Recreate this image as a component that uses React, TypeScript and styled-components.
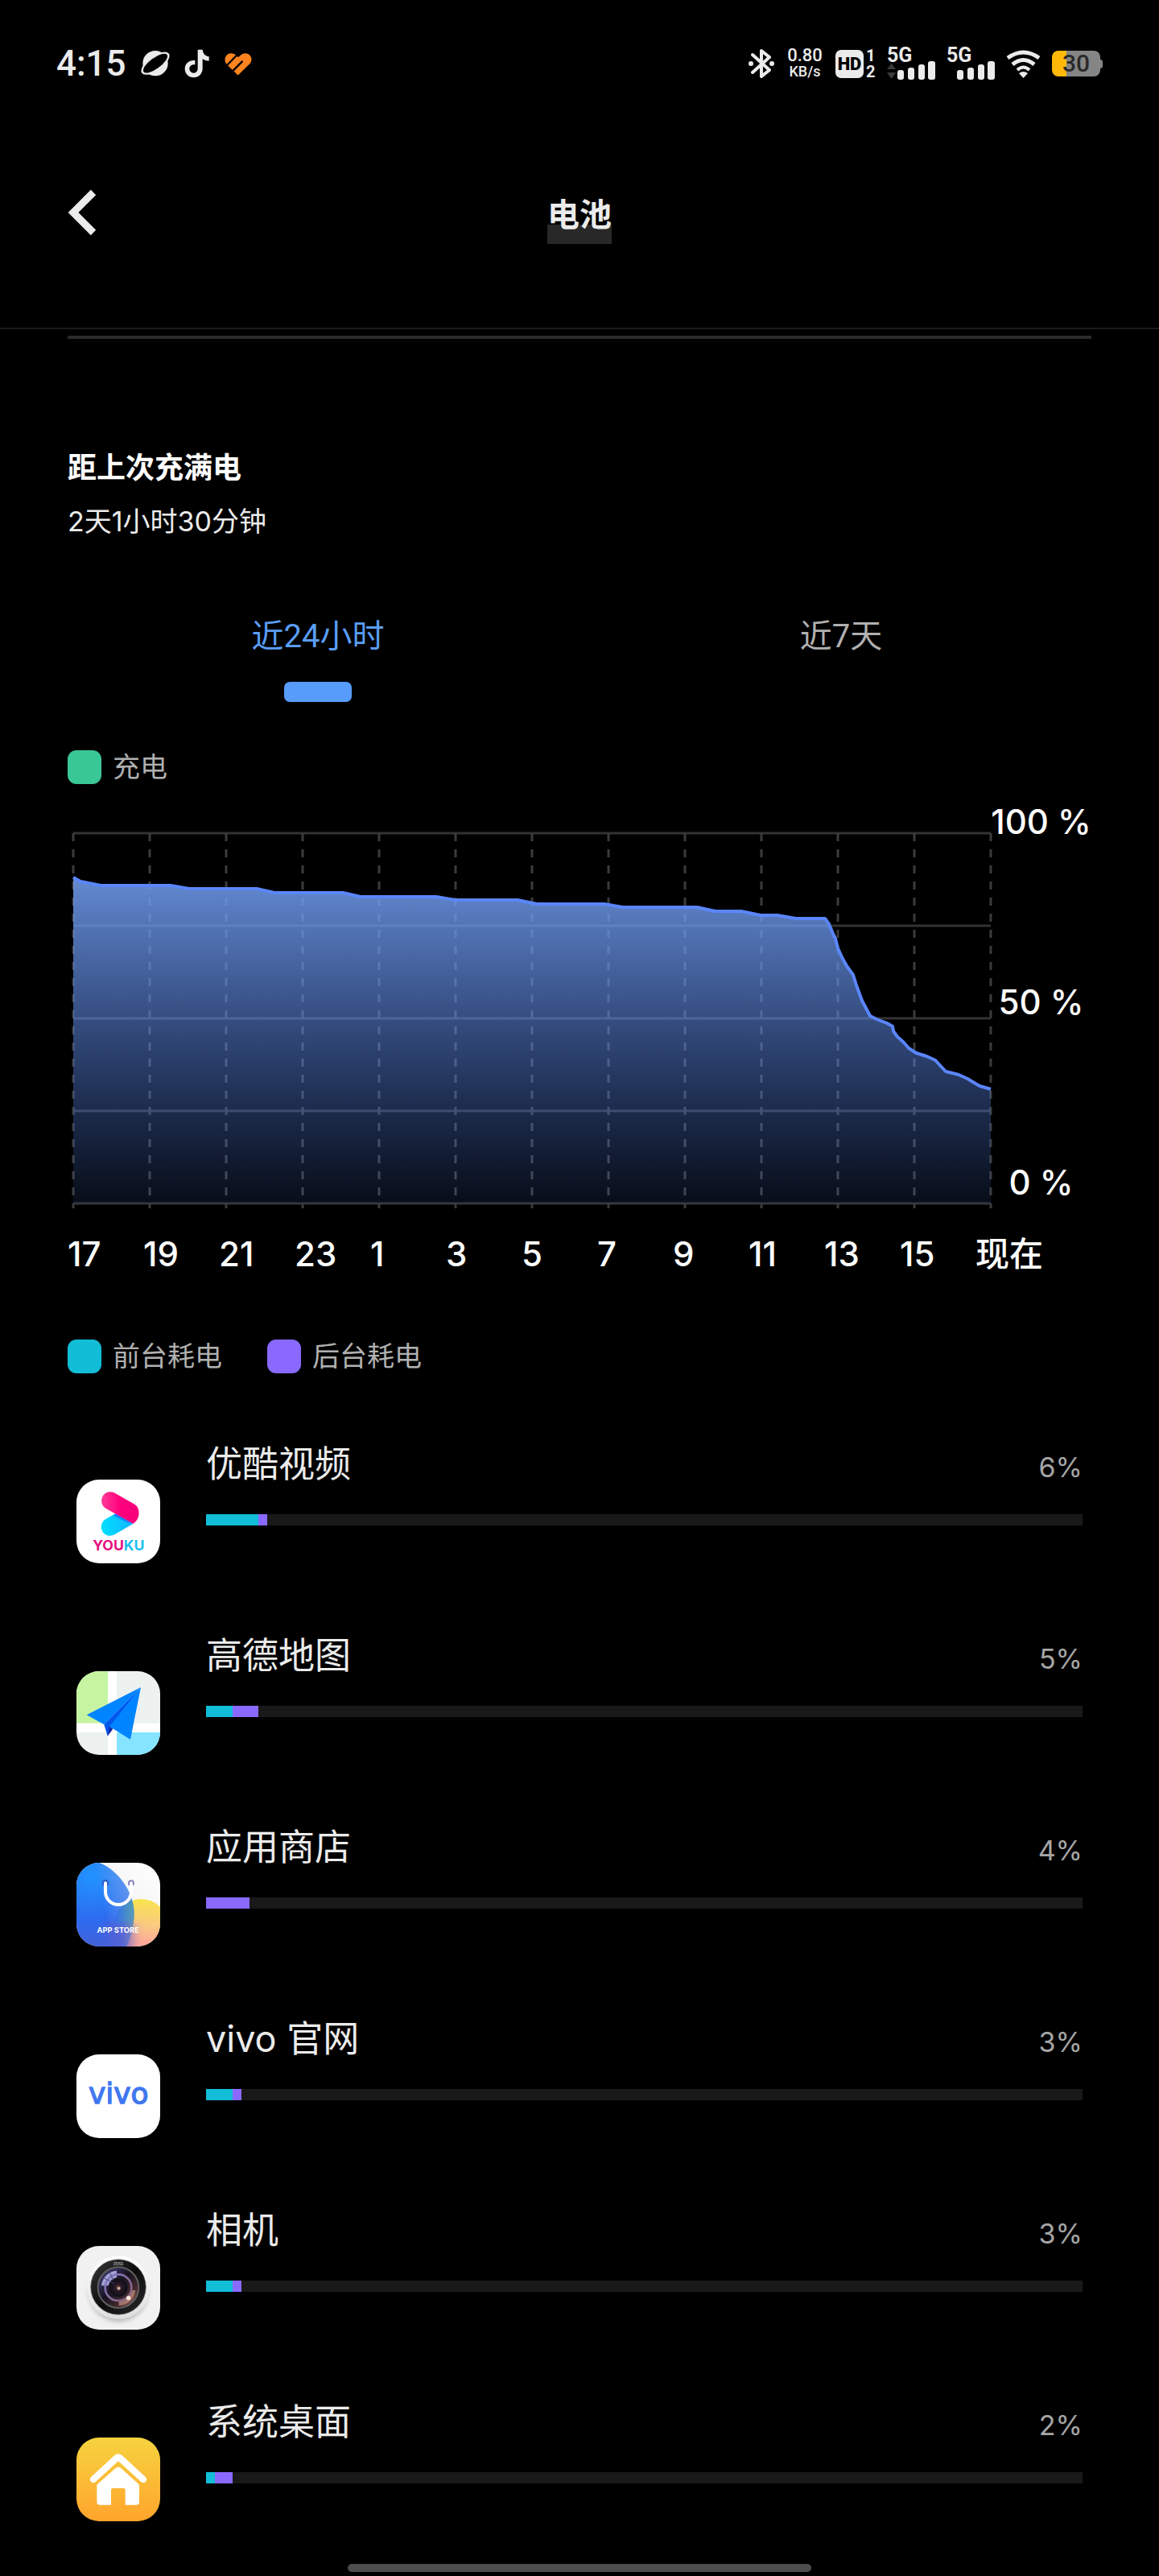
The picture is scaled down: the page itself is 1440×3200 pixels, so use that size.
import React, { useState } from 'react';
import styled, { createGlobalStyle } from 'styled-components';

const GlobalStyle = createGlobalStyle`
  *, *::before, *::after { box-sizing: border-box; }
  body {
    margin: 0;
    background: #000;
    color: #ebebeb;
    font-family: Inter, "Noto Sans CJK SC", sans-serif;
  }
  h1, h2, p, ul { margin: 0; padding: 0; }
  button { border: 0; padding: 0; background: none; color: inherit; font: inherit; cursor: pointer; }
  svg { display: block; flex: none; }
`;

const Screen = styled.div`
  position: relative;
  overflow: hidden;
`;

/* ---------- status bar ---------- */

const StatusBar = styled.div`
  display: flex;
  justify-content: space-between;
  align-items: center;
  height: 128px;
  padding: 30px 70px 0;
  font-family: Roboto, sans-serif;
`;

const StatusGroup = styled.div<{ $gap: number }>`
  display: flex;
  align-items: center;
  gap: ${(p) => p.$gap}px;
`;

const Clock = styled.time`
  font-size: 44px;
  font-weight: 500;
  line-height: 52px;
`;

const NetSpeed = styled.div`
  display: flex;
  flex-direction: column;
  align-items: center;
  width: 48px;
  font-weight: 500;
  font-size: 18px;
  line-height: 20px;
`;

const NetValue = styled.span`
  font-size: 22px;
`;

const HdBlock = styled.div`
  display: flex;
  align-items: center;
  gap: 3px;
`;

const HdBadge = styled.span`
  width: 35px;
  border-radius: 7px;
  background: #ebebeb;
  color: #000;
  font-size: 22px;
  font-weight: 900;
  line-height: 35px;
  text-align: center;
`;

const SimStack = styled.span`
  display: flex;
  flex-direction: column;
  width: 12px;
  font-size: 20px;
  font-weight: 700;
  line-height: 20px;
`;

const BatteryBody = styled.div`
  display: flex;
  align-items: center;
`;

const BatteryCell = styled.div<{ $level: number }>`
  width: 60px;
  border-radius: 8px;
  background: linear-gradient(90deg, #ffb908 ${(p) => p.$level}%, #858585 ${(p) => p.$level}%);
  color: #292929;
  font-size: 30px;
  font-weight: 500;
  line-height: 32px;
  text-align: center;
`;

const BatteryCap = styled.div`
  width: 3px;
  height: 11px;
  border-radius: 0 4px 4px 0;
  background: #858585;
`;

/* ---------- header ---------- */

const Header = styled.header`
  display: grid;
  grid-template-columns: 1fr auto 1fr;
  align-items: center;
  height: 281px;
  padding: 0 84px 8px;
  border-bottom: 2px solid #1a1a1a;
`;

const BackButton = styled.button`
  justify-self: start;
`;

const Title = styled.h1`
  padding-top: 6px;
  background: linear-gradient(#282828, #282828) 0 100% / 100% 24px no-repeat;
  font-size: 40px;
  font-weight: 700;
  line-height: 72px;
`;

/* ---------- content ---------- */

const Content = styled.main`
  padding: 8px 84px 0;
`;

const Divider = styled.hr`
  height: 4px;
  margin: 0;
  border: 0;
  background: #2b2b2b;
`;

const Summary = styled.section`
  display: flex;
  flex-direction: column;
  gap: 19px;
  padding: 136px 0 89px;
  line-height: 48px;
`;

const SummaryTitle = styled.h2`
  color: #fff;
  font-size: 36px;
  font-weight: 700;
`;

const SummaryText = styled.p`
  font-size: 34px;
`;

const Tabs = styled.div`
  display: grid;
  grid-template-columns: 1fr 1fr;
  margin: 0 -14px 60px;
`;

const Tab = styled.button<{ $active: boolean }>`
  display: flex;
  flex-direction: column;
  align-items: center;
  gap: 26px;
  color: ${(p) => (p.$active ? '#5a9df5' : '#b0b0b0')};
  font-family: Roboto, "Noto Sans CJK SC", sans-serif;
  font-size: 40px;
  line-height: 60px;

  &::after {
    content: '';
    width: 84px;
    height: 25px;
    border-radius: 7px;
    background: ${(p) => (p.$active ? '#579cfb' : 'transparent')};
  }
`;

const Legend = styled.div`
  display: flex;
  gap: 56px;
`;

const LegendItem = styled.div`
  display: flex;
  align-items: center;
  gap: 14px;
  color: #b0b0b0;
  font-size: 34px;
  line-height: 42px;
`;

const Swatch = styled.span<{ $color: string }>`
  width: 42px;
  height: 42px;
  border-radius: 11px;
  background: ${(p) => p.$color};
`;

const Chart = styled.figure`
  display: flex;
  height: 500px;
  margin: 21px 0 0;
  padding-left: 7px;
  color: #fff;
`;

const Plot = styled.svg`
  flex: 1;
  min-width: 0;
  height: 460px;
  margin-top: 40px;
  overflow: visible;
`;

const YAxis = styled.div`
  display: flex;
  flex-direction: column;
  justify-content: space-between;
  align-items: center;
  width: 125px;
  font-size: 42px;
  font-weight: 500;
  line-height: 52px;
  white-space: nowrap;
`;

const XAxis = styled.div`
  display: grid;
  grid-template-columns: repeat(12, 1fr) 144px;
  margin: 37px 0 80px;
  color: #fff;
  font-size: 42px;
  font-weight: 500;
  line-height: 52px;
`;

/* ---------- app list ---------- */

const AppList = styled.ul`
  margin-top: 65px;
  padding: 0 11px;
  list-style: none;
`;

const AppRow = styled.li`
  display: flex;
  gap: 57px;
  height: 238px;
`;

const AppIcon = styled.svg`
  width: 104px;
  height: 104px;
  margin-top: 67px;
  border-radius: 28px;
`;

const AppInfo = styled.div`
  display: flex;
  flex: 1;
  flex-direction: column;
  gap: 32px;
  padding-top: 18px;
`;

const AppLine = styled.div`
  display: flex;
  justify-content: space-between;
  align-items: baseline;
  height: 60px;
  line-height: 60px;
`;

const AppName = styled.span`
  font-size: 45px;
`;

const AppShare = styled.span`
  color: #a6a6a6;
  font-size: 34px;
`;

const Track = styled.div`
  display: flex;
  height: 14px;
  background: #191919;
`;

const Segment = styled.div<{ $color: string }>`
  background: ${(p) => p.$color};
`;

const HomeIndicator = styled.div`
  position: absolute;
  bottom: 4px;
  left: 30%;
  width: 40%;
  height: 10px;
  border-radius: 5px;
  background: #4d4d4d;
`;

/* ---------- data ---------- */

const FOREGROUND = '#12bdd8';
const BACKGROUND = '#8969ff';

const LINE: [number, number][] = [
  [0, 55], [9, 60], [34, 65], [121, 65], [144, 69], [228, 69], [250, 74], [335, 74], [357, 79],
  [451, 79], [474, 83], [552, 83], [576, 88], [660, 88], [683, 92], [775, 92], [798, 97],
  [830, 97], [854, 102], [875, 102], [898, 106], [934, 106], [939, 113], [944, 125], [947, 131],
  [950, 143], [955, 154], [961, 165], [969, 176], [973, 189], [980, 208], [990, 227], [998, 231],
  [1011, 236], [1018, 240], [1019, 246], [1024, 253], [1031, 259], [1038, 267], [1047, 273],
  [1060, 277], [1071, 282], [1084, 296], [1100, 300], [1111, 305], [1126, 314], [1140, 318],
];

const HOURS = ['17', '19', '21', '23', '1', '3', '5', '7', '9', '11', '13', '15', '现在'];

/* ---------- icons ---------- */

const Signal = ({ data }: { data?: boolean }) => (
  <svg width="60" height="60" viewBox="0 -10 60 60" fill="#ebebeb">
    <text x="0" y="18" fontSize="25" fontWeight="700">5G</text>
    {data && <path d="M5.500 20 11 27H0zM5.500 39 0 31h11z" fill="#3a3a3a" />}
    <rect x="13" y="28" width="8" height="12" rx="3" />
    <rect x="26" y="25" width="8" height="15" rx="3" />
    <rect x="39" y="21" width="8" height="19" rx="3" />
    <rect x="51" y="17" width="9" height="23" rx="3" />
  </svg>
);

const YoukuIcon = () => (
  <AppIcon viewBox="0 0 312 312">
    <defs>
      <linearGradient id="ykPink"><stop offset="0" stopColor="#ff3d97" /><stop offset=".5" stopColor="#ff007c" /><stop offset="1" stopColor="#f5007c" /></linearGradient>
      <linearGradient id="ykCyan"><stop offset="0" stopColor="#00e0ff" /><stop offset="1" stopColor="#10b4ff" /></linearGradient>
    </defs>
    <rect width="312" height="312" fill="#fff" />
    <path d="M212 164 142 205A33 33 0 0 1 109 147L145 127Z" fill="url(#ykCyan)" />
    <path d="M145 127 212 164 190 160 138 134Z" fill="#1a7fff" />
    <path d="M143 50 217 92C236 104 236 132 227 148Q221 159 212 164L110 108A33 33 0 0 1 143 50Z" fill="url(#ykPink)" />
    <text x="157" y="265" textAnchor="middle" fontSize="53" fontWeight="700" fill="#e6107f">YOU<tspan fill="#1cc0ee">KU</tspan></text>
  </AppIcon>
);

const AmapIcon = () => (
  <AppIcon viewBox="0 0 312 312">
    <rect width="312" height="312" fill="#edf1f0" />
    <rect width="117" height="194" fill="#c5f5a0" />
    <rect x="150" y="228" width="162" height="84" fill="#85e4ff" />
    <path d="M117 0H150V194H312V228H150V312H117V228H0V194H117Z" fill="#fff" />
    <path d="M240 60 103 199 116 242 126 206Z" fill="#0057ee" />
    <path d="M116 242 123 205 136 215Z" fill="#1027a8" />
    <path d="M240 60 38 163 103 199ZM240 60 201 254 123 206Z" fill="#0084ff" />
  </AppIcon>
);

const StoreIcon = () => (
  <AppIcon viewBox="0 0 312 312">
    <defs>
      <radialGradient id="stBlue" gradientUnits="userSpaceOnUse" cx="55" cy="50" r="270"><stop offset="0" stopColor="#2094ff" /><stop offset=".6" stopColor="#2d6cf0" /><stop offset="1" stopColor="#4560d8" /></radialGradient>
      <linearGradient id="stPale" gradientUnits="userSpaceOnUse" x1="90" y1="120" x2="215" y2="90"><stop offset="0" stopColor="#7db0f5" stopOpacity="0" /><stop offset="1" stopColor="#7da4e8" stopOpacity=".8" /></linearGradient>
      <linearGradient id="stSun" x1="0" y1="0" x2="0" y2="1"><stop offset="0" stopColor="#f8e44e" /><stop offset=".5" stopColor="#fbc884" /><stop offset=".85" stopColor="#ffa49c" /></linearGradient>
      <linearGradient id="stMix" gradientUnits="userSpaceOnUse" x1="140" y1="0" x2="218" y2="0"><stop offset="0" stopColor="#2f6ff0" stopOpacity=".9" /><stop offset="1" stopColor="#56a0a8" stopOpacity=".9" /></linearGradient>
      <linearGradient id="stFade" x1="0" y1="0" x2="1" y2="0"><stop offset="0" stopColor="#4560dc" /><stop offset=".5" stopColor="#5a62d4" stopOpacity=".9" /><stop offset="1" stopColor="#ffa49c" stopOpacity="0" /></linearGradient>
      <linearGradient id="stPaper" x1="1" y1="0" x2="0" y2="1"><stop offset="0" stopColor="#fff" /><stop offset=".4" stopColor="#f6f6f8" /><stop offset="1" stopColor="#d8d8e4" /></linearGradient>
      <clipPath id="stClip"><circle cx="240" cy="238" r="103" /></clipPath>
      <filter id="stSoft" x="-30%" y="-30%" width="160%" height="160%"><feGaussianBlur stdDeviation="12" /></filter>
    </defs>
    <rect width="312" height="312" fill="url(#stPaper)" />
    <circle cx="240" cy="238" r="103" fill="url(#stSun)" />
    <path d="M0 0H85C150 25 208 100 214 175C217 225 205 275 185 312H0Z" fill="url(#stBlue)" />
    <path d="M0 0H85C150 25 208 100 214 175C217 225 205 275 185 312H0Z" fill="url(#stPale)" />
    <path d="M0 0H85C150 25 208 100 214 175C217 225 205 275 185 312H0Z" fill="url(#stMix)" clipPath="url(#stClip)" />
    <path d="M110 225H250L225 325H110Z" fill="url(#stFade)" filter="url(#stSoft)" />
    <circle cx="108" cy="76" r="13" fill="#2a5fc8" />
    <circle cx="204" cy="76" r="12" fill="#8784bb" />
    <path d="M108 76V108A48 48 0 0 0 204 108V76" fill="none" stroke="#fff" strokeWidth="12" strokeLinecap="round" />
    <text x="155" y="262" textAnchor="middle" fontSize="28" fontWeight="700" fill="#fff">APP STORE</text>
  </AppIcon>
);

const VivoIcon = () => (
  <AppIcon viewBox="0 0 312 312">
    <rect width="312" height="312" fill="#fff" />
    <text x="157" y="184" textAnchor="middle" fontSize="108" fontFamily="DejaVu Sans" fill="#4177f0" stroke="#4177f0" strokeWidth="4">vivo</text>
  </AppIcon>
);

const CameraIcon = () => (
  <AppIcon viewBox="0 0 312 312">
    <defs>
      <linearGradient id="cmRim" x1="0" y1="0" x2="0" y2="1"><stop offset="0" stopColor="#fff" /><stop offset="1" stopColor="#dedede" /></linearGradient>
      <linearGradient id="cmBody" x1="0" y1="0" x2="1" y2="1"><stop offset="0" stopColor="#3a3a3a" /><stop offset=".5" stopColor="#0c0c0c" /><stop offset="1" stopColor="#2a2a2a" /></linearGradient>
      <linearGradient id="cmGlass" x1="0" y1="0" x2="1" y2="1"><stop offset="0" stopColor="#4d4a8c" /><stop offset=".45" stopColor="#17121f" /><stop offset=".75" stopColor="#4a2c30" /><stop offset="1" stopColor="#b98273" /></linearGradient>
      <linearGradient id="cmRing" x1="0" y1="0" x2="1" y2="1"><stop offset="0" stopColor="#7e78c8" /><stop offset="1" stopColor="#8a5f72" /></linearGradient>
      <radialGradient id="cmCore"><stop offset="0" stopColor="#8a5547" /><stop offset=".3" stopColor="#2a1b26" /><stop offset="1" stopColor="#0e0b16" /></radialGradient>
      <filter id="cmShadow" x="-30%" y="-30%" width="160%" height="160%"><feGaussianBlur stdDeviation="10" /></filter>
    </defs>
    <rect width="312" height="312" fill="#f1f1f1" />
    <circle cx="156" cy="172" r="108" fill="#000" opacity=".28" filter="url(#cmShadow)" />
    <circle cx="156" cy="155" r="118" fill="url(#cmRim)" />
    <circle cx="156" cy="153" r="103" fill="url(#cmBody)" stroke="#777" strokeWidth="2" />
    <circle cx="156" cy="155" r="76" fill="url(#cmGlass)" stroke="#5e5e5e" strokeWidth="6" />
    <path d="M93 148A63 63 0 0 1 150 92L150 118A38 38 0 0 0 119 148Z" fill="#b9b8ec" opacity=".85" />
    <path d="M220 165A64 64 0 0 1 158 222L158 206A50 50 0 0 0 205 165Z" fill="#d09a88" opacity=".65" />
    <circle cx="156" cy="155" r="49" fill="none" stroke="url(#cmRing)" strokeWidth="8" />
    <circle cx="156" cy="155" r="36" fill="url(#cmCore)" stroke="#2f2a3c" strokeWidth="2" />
    <path d="M100 118 140 140M122 96 138 128" stroke="#4b4880" strokeWidth="3" />
    <circle cx="194" cy="194" r="8" fill="#ffe8dc" />
    <circle cx="158" cy="158" r="6" fill="#c9aaa0" />
    <text x="156" y="73" textAnchor="middle" fontSize="13" fontWeight="700" fill="#aaa">ZEISS</text>
  </AppIcon>
);

const LauncherIcon = () => (
  <AppIcon viewBox="0 0 312 312">
    <defs>
      <linearGradient id="lnBg" x1="0" y1="0" x2="0" y2="1"><stop offset="0" stopColor="#f5d33f" /><stop offset=".5" stopColor="#fbbc36" /><stop offset="1" stopColor="#ffa42c" /></linearGradient>
    </defs>
    <rect width="312" height="312" fill="url(#lnBg)" />
    <path d="M63 156 149 77Q156 71 163 77L249 156" fill="none" stroke="#fff" strokeWidth="25" strokeLinecap="round" strokeLinejoin="round" />
    <path d="M76 180Q76 176 80 172L147 113Q156 107 165 113L230 172Q234 176 234 180V241Q234 251 224 251H182V195Q182 189 176 189H135Q129 189 129 195V251H86Q76 251 76 241Z" fill="#fff" />
  </AppIcon>
);

const APPS = [
  { name: '优酷视频', share: 6, front: 6, back: 1, Icon: YoukuIcon },
  { name: '高德地图', share: 5, front: 3, back: 3, Icon: AmapIcon },
  { name: '应用商店', share: 4, front: 0, back: 5, Icon: StoreIcon },
  { name: 'vivo 官网', share: 3, front: 3, back: 1, Icon: VivoIcon },
  { name: '相机', share: 3, front: 3, back: 1, Icon: CameraIcon },
  { name: '系统桌面', share: 2, front: 1, back: 2, Icon: LauncherIcon },
];

const TABS = ['近24小时', '近7天'];

const BatteryChart = () => {
  const points = LINE.map(([x, y]) => `${x},${y}`).join(' ');
  return (
    <Plot viewBox="0 0 1140 460" preserveAspectRatio="none" role="img" aria-label="电量曲线">
      <defs>
        <linearGradient id="area" gradientUnits="userSpaceOnUse" x1="0" y1="60" x2="0" y2="460">
          <stop offset="0" stopColor="#73a0f3" stopOpacity=".85" />
          <stop offset="1" stopColor="#5080f0" stopOpacity=".1" />
        </linearGradient>
      </defs>
      {[0, 115, 230, 345, 460].map((y) => (
        <line key={y} x1="0" x2="1140" y1={y} y2={y} stroke="#333" strokeWidth="3" />
      ))}
      {Array.from({ length: 13 }, (_, i) => (
        <line key={i} x1={i * 95} x2={i * 95} y1="0" y2="466" stroke="#3b3b3b" strokeWidth="3" strokeDasharray="10 10" />
      ))}
      <polygon points={`0,460 ${points} 1140,460`} fill="url(#area)" />
      <polyline points={points} fill="none" stroke="#5b86fa" strokeWidth="4" strokeLinejoin="round" />
    </Plot>
  );
};

export default function App() {
  const [active, setActive] = useState(0);

  return (
    <Screen>
      <GlobalStyle />
      <StatusBar>
        <StatusGroup $gap={18}>
          <Clock>4:15</Clock>
          <svg width="36" height="34" viewBox="0 0 108 102">
            <circle cx="54" cy="50" r="47" fill="#ebebeb" />
            <ellipse cx="54" cy="50" rx="62" ry="27" transform="rotate(-36 54 50)" fill="#ebebeb" />
            <ellipse cx="54" cy="50" rx="54" ry="20" transform="rotate(-36 54 50)" fill="#000" />
          </svg>
          <svg width="32" height="36" viewBox="0 0 96 108" fill="#ebebeb">
            <path d="M50 2H68C69 17 79 27 92 28V44C82 44 75 41 68 37V72C68 92 53 106 35 106C16 106 2 92 2 73C2 54 18 40 40 42V58C28 56 19 63 19 73C19 82 26 89 35 89C44 89 50 82 50 73Z" />
          </svg>
          <svg width="34" height="29" viewBox="0 0 100 85">
            <path d="M49 84 8 44C-12 18 18-10 42 11L50 18 58 11C82-10 112 18 92 42Z" fill="#ff8420" />
            <path d="M0 56 47 8M24 74 66 32" stroke="#000" strokeWidth="7" />
          </svg>
        </StatusGroup>
        <StatusGroup $gap={14}>
          <svg width="32" height="36" viewBox="0 0 32 36">
            <path d="M5 7 26 26 16 34V2L26 10 5 29" fill="none" stroke="#ebebeb" strokeWidth="4" strokeLinejoin="round" strokeLinecap="round" />
            <circle cx="3" cy="18" r="3" fill="#ebebeb" />
            <circle cx="29" cy="18" r="3" fill="#ebebeb" />
          </svg>
          <NetSpeed>
            <NetValue>0.80</NetValue>
            <span>KB/s</span>
          </NetSpeed>
          <HdBlock>
            <HdBadge>HD</HdBadge>
            <SimStack>
              <span>1</span>
              <span>2</span>
            </SimStack>
          </HdBlock>
          <Signal data />
          <Signal />
          <svg width="43" height="35" viewBox="0 0 43 35" fill="none" stroke="#ebebeb" strokeWidth="5">
            <path d="M2 10Q21.500-4 41 10" />
            <path d="M8 18Q21.500 7 35 18" />
            <path d="M14 25Q21.500 18 29 25" strokeWidth="4" />
            <path d="M16 29Q21.500 25 27 29L21.500 35Z" fill="#ebebeb" stroke="none" />
          </svg>
          <BatteryBody>
            <BatteryCell $level={30}>30</BatteryCell>
            <BatteryCap />
          </BatteryBody>
        </StatusGroup>
      </StatusBar>

      <Header>
        <BackButton aria-label="返回">
          <svg width="36" height="58" viewBox="0 0 36 58">
            <path d="M32 4 7 29 32 54" fill="none" stroke="#ebebeb" strokeWidth="9" />
          </svg>
        </BackButton>
        <Title>电池</Title>
      </Header>

      <Content>
        <Divider />
        <Summary>
          <SummaryTitle>距上次充满电</SummaryTitle>
          <SummaryText>2天1小时30分钟</SummaryText>
        </Summary>

        <Tabs role="tablist">
          {TABS.map((label, i) => (
            <Tab key={label} role="tab" aria-selected={active === i} $active={active === i} onClick={() => setActive(i)}>
              {label}
            </Tab>
          ))}
        </Tabs>

        <Legend>
          <LegendItem><Swatch $color="#3ac796" />充电</LegendItem>
        </Legend>

        <Chart>
          <BatteryChart />
          <YAxis>
            <span>100 %</span>
            <span>50 %</span>
            <span>0 %</span>
          </YAxis>
        </Chart>
        <XAxis>
          {HOURS.map((h) => <span key={h}>{h}</span>)}
        </XAxis>

        <Legend>
          <LegendItem><Swatch $color={FOREGROUND} />前台耗电</LegendItem>
          <LegendItem><Swatch $color={BACKGROUND} />后台耗电</LegendItem>
        </Legend>

        <AppList>
          {APPS.map(({ name, share, front, back, Icon }) => (
            <AppRow key={name}>
              <Icon />
              <AppInfo>
                <AppLine>
                  <AppName>{name}</AppName>
                  <AppShare>{share}%</AppShare>
                </AppLine>
                <Track>
                  <Segment $color={FOREGROUND} style={{ width: `${front}%` }} />
                  <Segment $color={BACKGROUND} style={{ width: `${back}%` }} />
                </Track>
              </AppInfo>
            </AppRow>
          ))}
        </AppList>
      </Content>
      <HomeIndicator />
    </Screen>
  );
}
